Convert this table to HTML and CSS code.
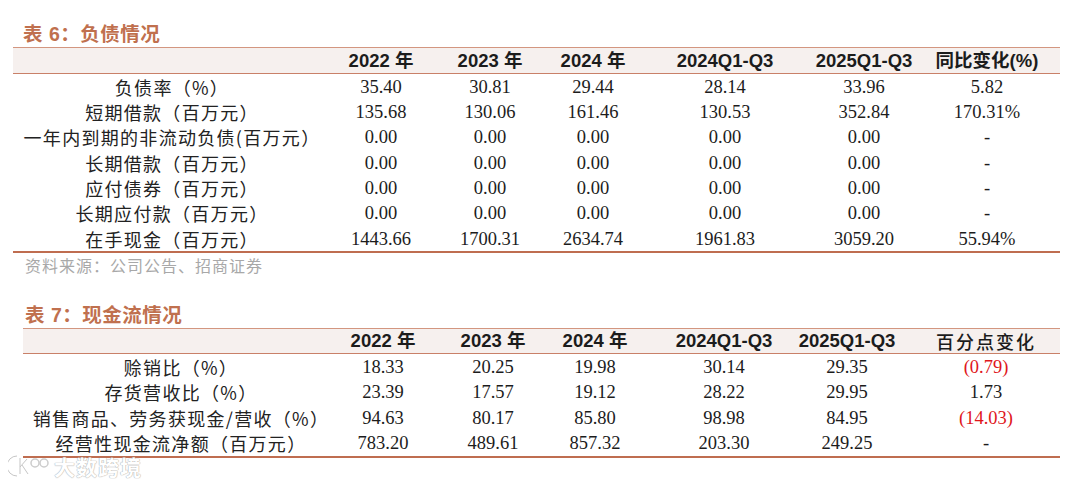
FILE: index.html
```html
<!DOCTYPE html>
<html lang="zh-CN">
<head>
<meta charset="utf-8">
<title>负债情况 / 现金流情况</title>
<link rel="stylesheet" href="styles.css">
</head>
<body>
<div class="page">
  <section class="block b6">
    <h2 class="title">表 6：负债情况</h2>
    <div class="tbl t6">
      <div class="row head">
        <div class="c"></div>
        <div class="c">2022 年</div>
        <div class="c">2023 年</div>
        <div class="c">2024 年</div>
        <div class="c">2024Q1-Q3</div>
        <div class="c">2025Q1-Q3</div>
        <div class="c">同比变化(%)</div>
      </div>
      <div class="row">
        <div class="c lbl">负债率（%）</div>
        <div class="c">35.40</div><div class="c">30.81</div><div class="c">29.44</div><div class="c">28.14</div><div class="c">33.96</div><div class="c">5.82</div>
      </div>
      <div class="row">
        <div class="c lbl">短期借款（百万元）</div>
        <div class="c">135.68</div><div class="c">130.06</div><div class="c">161.46</div><div class="c">130.53</div><div class="c">352.84</div><div class="c">170.31%</div>
      </div>
      <div class="row">
        <div class="c lbl">一年内到期的非流动负债(百万元）</div>
        <div class="c">0.00</div><div class="c">0.00</div><div class="c">0.00</div><div class="c">0.00</div><div class="c">0.00</div><div class="c">-</div>
      </div>
      <div class="row">
        <div class="c lbl">长期借款（百万元）</div>
        <div class="c">0.00</div><div class="c">0.00</div><div class="c">0.00</div><div class="c">0.00</div><div class="c">0.00</div><div class="c">-</div>
      </div>
      <div class="row">
        <div class="c lbl">应付债券（百万元）</div>
        <div class="c">0.00</div><div class="c">0.00</div><div class="c">0.00</div><div class="c">0.00</div><div class="c">0.00</div><div class="c">-</div>
      </div>
      <div class="row">
        <div class="c lbl">长期应付款（百万元）</div>
        <div class="c">0.00</div><div class="c">0.00</div><div class="c">0.00</div><div class="c">0.00</div><div class="c">0.00</div><div class="c">-</div>
      </div>
      <div class="row">
        <div class="c lbl">在手现金（百万元）</div>
        <div class="c">1443.66</div><div class="c">1700.31</div><div class="c">2634.74</div><div class="c">1961.83</div><div class="c">3059.20</div><div class="c">55.94%</div>
      </div>
    </div>
    <p class="src">资料来源：公司公告、招商证券</p>
  </section>

  <section class="block b7">
    <h2 class="title">表 7：现金流情况</h2>
    <div class="tbl t7">
      <div class="row head">
        <div class="c"></div>
        <div class="c">2022 年</div>
        <div class="c">2023 年</div>
        <div class="c">2024 年</div>
        <div class="c">2024Q1-Q3</div>
        <div class="c">2025Q1-Q3</div>
        <div class="c cjkhead">百分点变化</div>
      </div>
      <div class="row">
        <div class="c lbl">赊销比（%）</div>
        <div class="c">18.33</div><div class="c">20.25</div><div class="c">19.98</div><div class="c">30.14</div><div class="c">29.35</div><div class="c neg">(0.79)</div>
      </div>
      <div class="row">
        <div class="c lbl">存货营收比（%）</div>
        <div class="c">23.39</div><div class="c">17.57</div><div class="c">19.12</div><div class="c">28.22</div><div class="c">29.95</div><div class="c">1.73</div>
      </div>
      <div class="row">
        <div class="c lbl">销售商品、劳务获现金/营收（%）</div>
        <div class="c">94.63</div><div class="c">80.17</div><div class="c">85.80</div><div class="c">98.98</div><div class="c">84.95</div><div class="c neg">(14.03)</div>
      </div>
      <div class="row">
        <div class="c lbl">经营性现金流净额（百万元）</div>
        <div class="c">783.20</div><div class="c">489.61</div><div class="c">857.32</div><div class="c">203.30</div><div class="c">249.25</div><div class="c">-</div>
      </div>
    </div>
  </section>

  <div class="watermark">
    <svg class="wm-icon" width="42" height="22" viewBox="0 0 42 22" aria-hidden="true">
      <path d="M9 1 A10 10 0 0 0 9 21" fill="none" stroke="#fff" stroke-width="3"/>
      <path d="M9 1 A10 10 0 0 0 9 21" fill="none" stroke="#bdbdbd" stroke-width="1"/>
      <path d="M12 3 V19 M12 12 L19 4 M14 10 L20 19" fill="none" stroke="#fff" stroke-width="3"/>
      <path d="M12 3 V19 M12 12 L19 4 M14 10 L20 19" fill="none" stroke="#bdbdbd" stroke-width="1"/>
      <circle cx="27" cy="8" r="4" fill="none" stroke="#c4c4c4" stroke-width="1.5"/>
      <circle cx="36" cy="8" r="4" fill="none" stroke="#c4c4c4" stroke-width="1.5"/>
    </svg>
    <span class="wm-text">大数跨境</span>
  </div>
</div>
</body>
</html>
```

FILE: styles.css
```css
* { box-sizing: border-box; }

body {
  margin: 0;
  background: #ffffff;
  color: #1c1c1c;
  font-family: "Liberation Serif", "Noto Sans CJK SC", serif;
}

.page {
  position: relative;
  width: 1080px;
  height: 479px;
  overflow: hidden;
}

.block { display: block; }

.b6 { padding-left: 13px; width: 1060px; }
.b7 { padding-left: 23px; width: 1060px; margin-top: 25px; }

.title {
  margin: 0;
  height: 26px;
  line-height: 26px;
  font-family: "Liberation Sans", "Noto Sans CJK SC", sans-serif;
  font-weight: bold;
  font-size: 19.5px;
  letter-spacing: 0.5px;
  color: #c0704e;
  white-space: nowrap;
}
.b6 .title { margin-top: 21px; padding-left: 10px; }
.b7 .title { padding-left: 2px; }

.tbl {
  border-top: 1px solid #d39680;
  border-bottom: 2px solid #bf6d50;
}

.row {
  display: grid;
  height: 25.33px;
}
.t6 .row { grid-template-columns: 308px 120px 98px 108px 156px 122px 135px; }
.t7 .row { grid-template-columns: 306px 108px 112px 92px 166px 80px 173px; }

.row.head {
  background: #f6f0ee;
  border-bottom: 1px solid #c98068;
  font-family: "Liberation Sans", "Noto Sans CJK SC", sans-serif;
  font-weight: bold;
  font-size: 18.5px;
}
.t6 .row.head { height: 26px; }
.t7 .row.head { height: 25px; }

.c {
  display: flex;
  align-items: center;
  justify-content: center;
  white-space: nowrap;
  font-size: 18.5px;
  line-height: 20px;
}
.t6 .c:last-child { padding-right: 11px; }
.t7 .c:last-child { padding-left: 25px; }

.lbl {
  padding-left: 10px;
  font-family: "Noto Sans CJK SC", sans-serif;
  font-size: 18px;
  letter-spacing: 1.3px;
  color: #222;
}

.cjkhead {
  font-family: "Noto Sans CJK SC", sans-serif;
  font-weight: 500;
  font-size: 18px;
  letter-spacing: 2px;
}

.neg { color: #e0161b; }

.src {
  margin: 0;
  height: 24px;
  line-height: 24px;
  padding-left: 12px;
  font-family: "Noto Sans CJK SC", sans-serif;
  font-size: 16px;
  letter-spacing: 1px;
  color: #a8a8a8;
}

.watermark {
  position: absolute;
  left: 8px;
  top: 455px;
  display: flex;
  align-items: center;
  gap: 4px;
  opacity: 0.85;
}
.wm-text {
  font-family: "Noto Sans CJK SC", sans-serif;
  font-weight: bold;
  font-size: 21px;
  line-height: 21px;
  letter-spacing: 1px;
  color: #ffffff;
  text-shadow: 0 0 1px #9a9a9a, 0 0 1px #9a9a9a;
}
```
